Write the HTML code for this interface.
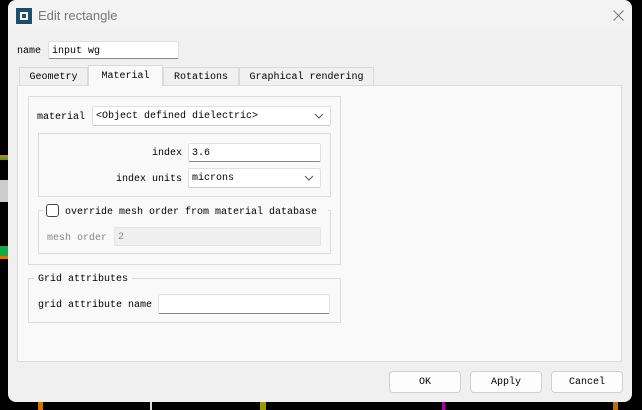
<!DOCTYPE html>
<html><head><style>
*{box-sizing:border-box;margin:0;padding:0}
body{width:642px;height:410px;background:#000;position:relative;overflow:hidden;font-family:"Liberation Mono",monospace;font-size:10px;color:#000}
.a{position:absolute}
.win{left:8px;top:0;width:624px;height:402px;background:#f0f0f0;border-radius:8px;overflow:hidden}
.title{left:0;top:0;width:624px;height:31px;background:#f3f3f3}
.inp{position:absolute;background:#fff;border:1px solid #e0e0e0;border-bottom:1px solid #888;border-radius:2px;padding:2px 3px 0;line-height:15px;white-space:pre}
.grp{position:absolute;border:1px solid #dcdcdc}
.lbl{position:absolute;line-height:12px;white-space:pre;margin-top:2px}
.chev{position:absolute;right:6px;top:5px;width:10px;height:8px}
.btn{position:absolute;top:371px;width:72px;height:22px;background:#fdfdfd;border:1px solid #d0d0d0;border-radius:4px;text-align:center;line-height:22px}
.tab{position:absolute;top:67px;height:18px;border:1px solid #dadada;border-bottom:none;background:#f0f0f0;text-align:center;line-height:19px}
</style></head><body>
<div class="a" style="left:0;top:155px;width:8px;height:3px;background:#e07000"></div>
<div class="a" style="left:0;top:158px;width:8px;height:2px;background:#3a3"></div>
<div class="a" style="left:0;top:180px;width:8px;height:22px;background:#ccc"></div>
<div class="a" style="left:0;top:246px;width:8px;height:10px;background:#1a4"></div>
<div class="a" style="left:0;top:256px;width:8px;height:3px;background:#e07000"></div>
<div class="a" style="left:442px;top:402px;width:3px;height:8px;background:#a0a"></div>
<div class="a" style="left:38px;top:402px;width:5px;height:8px;background:#c70"></div>
<div class="a" style="left:260px;top:402px;width:6px;height:8px;background:#990"></div>
<div class="a" style="left:613px;top:402px;width:5px;height:8px;background:#c60"></div>
<div class="a" style="left:150px;top:402px;width:2px;height:8px;background:#ddd"></div>
<div class="a win">
 <div class="a title"></div>
 <div class="a" style="left:8px;top:8px;width:16px;height:16px;background:#1b4f6b"></div>
 <div class="a" style="left:12px;top:12px;width:8px;height:8px;border:2px solid #fff"></div>
 <div class="a" style="left:30px;top:8px;font-family:'Liberation Sans',sans-serif;font-size:13px;color:#777">Edit rectangle</div>
 <svg class="a" style="left:605px;top:10px" width="11" height="11"><path d="M0.5 0.5L10.5 10.5M10.5 0.5L0.5 10.5" stroke="#777" stroke-width="1"/></svg>
</div>
<div class="lbl" style="left:17px;top:44px">name</div>
<div class="inp" style="left:48px;top:41px;width:131px;height:18px">input wg</div>
<div class="a" style="left:17px;top:85px;width:605px;height:277px;background:#f9f9f9;border:1px solid #dcdcdc"></div>
<div class="tab" style="left:19px;width:69px">Geometry</div>
<div class="tab" style="left:88px;top:65px;width:75px;height:21px;background:#f9f9f9;line-height:21px">Material</div>
<div class="tab" style="left:163px;width:76px">Rotations</div>
<div class="tab" style="left:239px;width:135px">Graphical rendering</div>
<div class="grp" style="left:28px;top:96px;width:313px;height:169px"></div>
<div class="lbl" style="left:37px;top:110px">material</div>
<div class="inp" style="left:92px;top:106px;width:239px;height:20px;border-bottom-color:#ccc">&lt;Object defined dielectric&gt;<svg class="chev" viewBox="0 0 10 8"><path d="M1 2L5 6L9 2" fill="none" stroke="#555"/></svg></div>
<div class="grp" style="left:38px;top:133px;width:293px;height:64px"></div>
<div class="lbl" style="left:152px;top:146px">index</div>
<div class="inp" style="left:188px;top:143px;width:133px;height:19px">3.6</div>
<div class="lbl" style="left:116px;top:172px">index units</div>
<div class="inp" style="left:188px;top:168px;width:133px;height:20px;border-bottom-color:#ccc">microns<svg class="chev" viewBox="0 0 10 8"><path d="M1 2L5 6L9 2" fill="none" stroke="#555"/></svg></div>
<div class="grp" style="left:38px;top:210px;width:293px;height:44px"></div>
<div class="a" style="left:44px;top:203px;width:284px;height:14px;background:#f9f9f9"></div>
<div class="a" style="left:46px;top:204px;width:13px;height:13px;border:1px solid #444;border-radius:3px;background:#fff"></div>
<div class="lbl" style="left:65px;top:205px">override mesh order from material database</div>
<div class="lbl" style="left:47px;top:231px;color:#888">mesh order</div>
<div class="inp" style="left:114px;top:227px;width:207px;height:19px;background:#efefef;border-color:#e4e4e4;color:#888">2</div>
<div class="grp" style="left:28px;top:278px;width:313px;height:45px"></div>
<div class="lbl" style="left:34px;top:272px;background:#f9f9f9;padding:0 4px">Grid attributes</div>
<div class="lbl" style="left:38px;top:298px">grid attribute name</div>
<div class="inp" style="left:158px;top:294px;width:172px;height:20px"></div>
<div class="btn" style="left:389px">OK</div>
<div class="btn" style="left:470px">Apply</div>
<div class="btn" style="left:551px">Cancel</div>
</body></html>
